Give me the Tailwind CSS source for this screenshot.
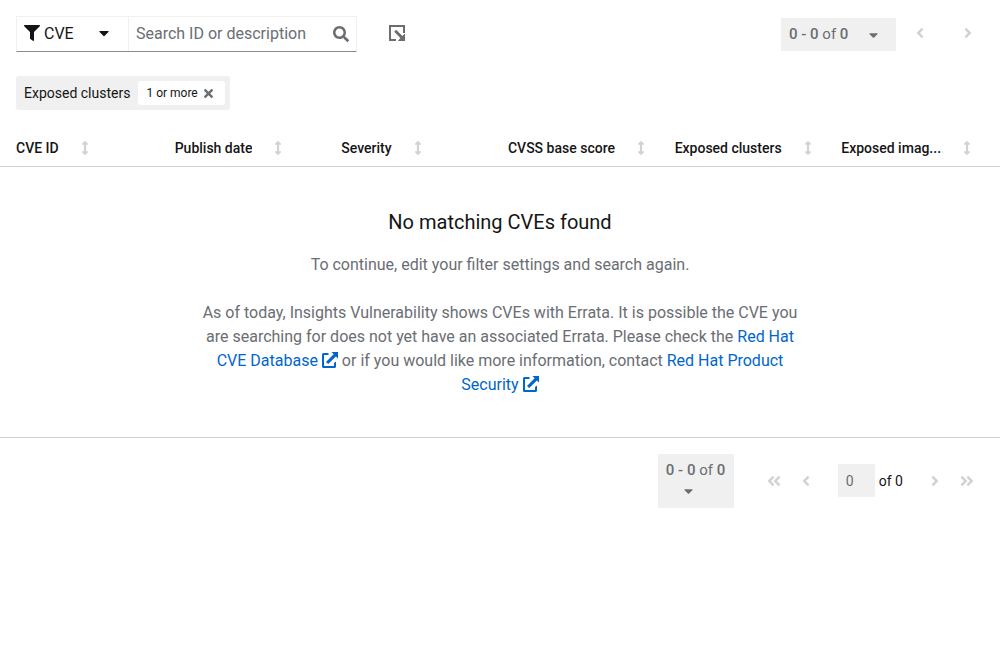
<!DOCTYPE html>
<html lang="en">
<head>
<meta charset="utf-8">
<meta name="viewport" content="width=device-width, initial-scale=1">
<title>CVEs</title>
<script src="https://cdn.jsdelivr.net/npm/@tailwindcss/browser@4"></script>
</head>
<body class="bg-white text-[#151515] font-['Roboto','Liberation_Sans',sans-serif] text-base">
<svg class="hidden" aria-hidden="true">
  <symbol id="caret" viewBox="0 0 320 512"><path d="M31.3 192h257.3c17.8 0 26.7 21.5 14.1 34.1L174.1 354.8c-7.8 7.8-20.5 7.8-28.3 0L17.2 226.1C4.6 213.5 13.5 192 31.3 192z"/></symbol>
  <symbol id="left" viewBox="0 0 256 512"><path d="M31.7 239l136-136c9.4-9.4 24.6-9.4 33.9 0l22.6 22.6c9.4 9.4 9.4 24.6 0 33.9L127.9 256l96.4 96.4c9.4 9.4 9.4 24.6 0 33.9L201.7 409c-9.4 9.4-24.6 9.4-33.9 0l-136-136c-9.5-9.4-9.5-24.6-.1-34z"/></symbol>
  <symbol id="right" viewBox="0 0 256 512"><use href="#left" width="256" height="512" transform="translate(256 0) scale(-1 1)"/></symbol>
  <symbol id="dleft" viewBox="0 0 448 512"><use href="#left" width="256" height="512"/><use href="#left" x="192" width="256" height="512"/></symbol>
  <symbol id="dright" viewBox="0 0 448 512"><use href="#right" width="256" height="512"/><use href="#right" x="192" width="256" height="512"/></symbol>
  <symbol id="sort" viewBox="0 0 256 512"><path d="M214.059 377.941H168V134.059h46.059c21.382 0 32.09-25.851 16.971-40.971L144.971 7.029c-9.373-9.373-24.568-9.373-33.941 0L24.971 93.088c-15.119 15.119-4.411 40.971 16.971 40.971H88v243.882H41.941c-21.382 0-32.09 25.851-16.971 40.971l86.059 86.059c9.373 9.373 24.568 9.373 33.941 0l86.059-86.059c15.12-15.119 4.412-40.971-16.97-40.971z"/></symbol>
  <symbol id="external" viewBox="0 0 16 16"><path d="M6.500 1H1.500Q0 1 0 2.500V14.500Q0 16 1.500 16H12.500Q14 16 14 14.500V9.500L12 11V14H2V3H6.500zM9.500 0H16V6.500L13.900 4.400L6.200 12.100L4 9.900L11.700 2.200z"/></symbol>
</svg>

<div class="flex items-start px-4 pt-4">
  <div class="flex h-9 w-[341px] border border-[#f0f0f0] border-b-[#8a8d90]">
    <div class="relative flex w-28 shrink-0 border-r border-[#f0f0f0]">
      <svg class="pointer-events-none absolute left-[7px] top-2 size-4" viewBox="0 0 512 512" fill="currentColor" aria-hidden="true"><path d="M487.976 0H24.028C2.710 0-8.047 25.866 7.058 40.971L192 225.941V432c0 7.831 3.821 15.170 10.237 19.662l80 55.980C298.020 518.690 320 507.493 320 487.980V225.941l184.947-184.970C520.021 25.896 509.338 0 487.976 0z"/></svg>
      <select aria-label="Filter by" class="w-full appearance-none bg-transparent pl-[27px] text-base outline-none"><option>CVE</option></select>
      <svg class="pointer-events-none absolute right-[19px] top-2 h-4 w-[10px]" fill="currentColor" aria-hidden="true"><use href="#caret"/></svg>
    </div>
    <input type="text" aria-label="Search ID or description" placeholder="Search ID or description" class="min-w-0 flex-1 px-[7px] text-base outline-none placeholder:text-[#6a6e73]">
    <button type="button" aria-label="Search" class="flex items-center pr-[7px] text-[#6a6e73]"><svg class="size-4" viewBox="0 0 512 512" fill="currentColor"><path d="M505 442.700L405.300 343c-4.500-4.500-10.600-7-17-7H372c27.600-35.300 44-79.700 44-128C416 93.100 322.900 0 208 0S0 93.100 0 208s93.100 208 208 208c48.300 0 92.700-16.400 128-44v16.300c0 6.400 2.500 12.500 7 17l99.700 99.700c9.400 9.400 24.600 9.400 33.900 0l28.300-28.300c9.400-9.400 9.400-24.600.1-34zM208 336c-70.700 0-128-57.200-128-128 0-70.700 57.200-128 128-128 70.700 0 128 57.200 128 128 0 70.700-57.200 128-128 128z"/></svg></button>
  </div>
  <button type="button" aria-label="Export" class="ml-4 flex h-[34px] items-center px-4 text-[#6a6e73]"><svg class="size-4 shrink-0" viewBox="0 0 16 16" fill="currentColor"><path d="M0 0H16V8H14V2H2V14H7V16H0zM5.200 6.700L7.200 4.700L13.400 10.900L16 8.600V16H8.800L11.400 12.900z"/></svg></button>
  <div class="ml-auto -mr-2 flex pt-[2px] text-[15px]">
    <button type="button" disabled aria-label="Items per page" class="flex h-[33px] w-[115px] items-center bg-[#f0f0f0] pl-2 text-[#6a6e73]"><span><b class="font-medium">0 - 0</b> of <b class="font-medium">0</b></span><svg class="ml-auto mr-[18px] h-[14px] w-[9px]" fill="currentColor"><use href="#caret"/></svg></button>
    <button type="button" disabled aria-label="Previous page" class="flex h-[30px] w-12 items-center justify-center text-[#d2d2d2]"><svg class="h-4 w-[10px]" fill="currentColor"><use href="#left"/></svg></button>
    <button type="button" disabled aria-label="Next page" class="flex h-[30px] w-12 items-center justify-center text-[#d2d2d2]"><svg class="h-4 w-[10px]" fill="currentColor"><use href="#right"/></svg></button>
  </div>
</div>

<div class="flex px-4 pt-6">
  <div class="flex h-[34px] items-center rounded-[3px] bg-[#f0f0f0] pl-2 pr-[5px] text-sm">
    <span class="mr-2">Exposed clusters</span>
    <span class="flex h-6 items-center rounded-[3px] bg-white pl-2 text-xs">1 or more<button type="button" aria-label="Remove filter" class="flex pl-[6px] pr-3 text-[#6a6e73]"><svg class="h-[13px] w-[9px]" viewBox="0 0 352 512" fill="currentColor"><path d="M242.720 256l100.070-100.070c12.280-12.280 12.280-32.190 0-44.480l-22.240-22.240c-12.280-12.280-32.190-12.280-44.480 0L176 189.280 75.930 89.210c-12.280-12.280-32.190-12.280-44.480 0L9.210 111.450c-12.280 12.280-12.280 32.190 0 44.480L109.280 256 9.210 356.070c-12.280 12.280-12.280 32.190 0 44.480l22.240 22.240c12.280 12.280 32.200 12.280 44.480 0L176 322.720l100.070 100.070c12.280 12.280 32.200 12.280 44.480 0l22.240-22.240c12.280-12.280 12.280-32.190 0-44.480L242.720 256z"/></svg></button></span>
  </div>
</div>

<table class="mt-3 w-full table-fixed border-collapse text-left text-sm">
  <thead>
    <tr class="h-11 border-b border-[#d2d2d2]">
      <th scope="col" class="pt-2 pl-4 pr-2 font-medium"><button type="button" class="flex max-w-full items-center gap-[22px]"><span class="truncate">CVE ID</span><svg class="h-[14px] w-2 shrink-0 text-[#d2d2d2]" fill="currentColor"><use href="#sort"/></svg></button></th>
      <th scope="col" class="px-2 pt-2 font-medium"><button type="button" class="flex max-w-full items-center gap-[22px]"><span class="truncate">Publish date</span><svg class="h-[14px] w-2 shrink-0 text-[#d2d2d2]" fill="currentColor"><use href="#sort"/></svg></button></th>
      <th scope="col" class="px-2 pt-2 font-medium"><button type="button" class="flex max-w-full items-center gap-[22px]"><span class="truncate">Severity</span><svg class="h-[14px] w-2 shrink-0 text-[#d2d2d2]" fill="currentColor"><use href="#sort"/></svg></button></th>
      <th scope="col" class="px-2 pt-2 font-medium"><button type="button" class="flex max-w-full items-center gap-[22px]"><span class="truncate">CVSS base score</span><svg class="h-[14px] w-2 shrink-0 text-[#d2d2d2]" fill="currentColor"><use href="#sort"/></svg></button></th>
      <th scope="col" class="px-2 pt-2 font-medium"><button type="button" class="flex max-w-full items-center gap-[22px]"><span class="truncate">Exposed clusters</span><svg class="h-[14px] w-2 shrink-0 text-[#d2d2d2]" fill="currentColor"><use href="#sort"/></svg></button></th>
      <th scope="col" class="px-2 pt-2 font-medium"><button type="button" title="Exposed images" class="flex max-w-full items-center gap-[22px]"><span class="truncate">Exposed imag...</span><svg class="h-[14px] w-2 shrink-0 text-[#d2d2d2]" fill="currentColor"><use href="#sort"/></svg></button></th>
    </tr>
  </thead>
  <tbody>
    <tr class="border-b border-[#d2d2d2]">
      <td colspan="6" class="pt-10 pb-10 text-center">
        <div class="mx-auto max-w-[600px] text-base text-[#6a6e73]">
          <h2 class="text-xl leading-[30px] text-[#151515]">No matching CVEs found</h2>
          <p class="mt-4">To continue, edit your filter settings and search again.</p>
          <p class="mt-6">As of today, Insights Vulnerability shows CVEs with Errata. It is possible the CVE you<br>are searching for does not yet have an associated Errata. Please check the <a href="#" class="text-[#0066cc]">Red Hat<br>CVE Database <svg class="inline size-4 align-[-2px]" fill="currentColor" aria-hidden="true"><use href="#external"/></svg></a> or if you would like more information, contact <a href="#" class="text-[#0066cc]">Red Hat Product<br>Security <svg class="inline size-4 align-[-2px]" fill="currentColor" aria-hidden="true"><use href="#external"/></svg></a></p>
        </div>
      </td>
    </tr>
  </tbody>
</table>

<nav aria-label="Pagination" class="flex items-start justify-end pr-[25px] pt-4 text-sm">
  <button type="button" disabled aria-label="Items per page" class="flex h-[54px] w-[76px] flex-col items-start bg-[#f0f0f0] px-2 pt-[6px] text-[15px] text-[#6a6e73]"><span class="whitespace-nowrap"><b class="font-medium">0 - 0</b> of <b class="font-medium">0</b></span><svg class="ml-[18px] mt-[3px] h-[14px] w-[9px]" fill="currentColor"><use href="#caret"/></svg></button>
  <div class="ml-6 flex h-[54px] items-center text-[#d2d2d2]">
    <button type="button" disabled aria-label="First page" class="flex w-8 justify-center"><svg class="h-4 w-[14px]" fill="currentColor"><use href="#dleft"/></svg></button>
    <button type="button" disabled aria-label="Previous page" class="flex w-8 justify-center"><svg class="h-4 w-[10px]" fill="currentColor"><use href="#left"/></svg></button>
    <input type="text" disabled aria-label="Current page" value="0" class="ml-4 h-[33px] w-[37px] bg-[#f0f0f0] pl-2 text-[#6a6e73]">
    <span class="ml-1 text-[#151515]">of 0</span>
    <button type="button" disabled aria-label="Next page" class="ml-4 flex w-8 justify-center"><svg class="h-4 w-[10px]" fill="currentColor"><use href="#right"/></svg></button>
    <button type="button" disabled aria-label="Last page" class="-mr-2 flex w-8 justify-center"><svg class="h-4 w-[14px]" fill="currentColor"><use href="#dright"/></svg></button>
  </div>
</nav>
</body>
</html>
